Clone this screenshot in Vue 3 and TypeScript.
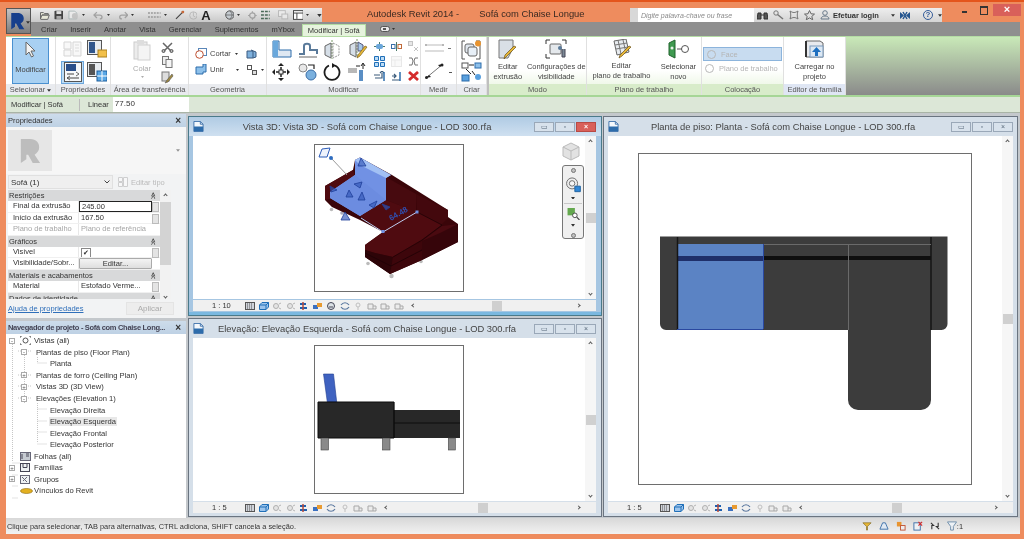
<script setup lang="ts">
interface TreeRow {
  label: string;
  level: number;
  exp?: '+' | '-';
  icon?: string;
  sel?: boolean;
}

interface PropRow {
  head?: boolean;
  label: string;
  value?: string;
  kind?: 'input' | 'check' | 'button' | 'muted' | 'thumb';
}

interface ViewWin {
  id: string;
  title: string;
  scale: string;
  active?: boolean;
}

const tabs = ['Criar', 'Inserir', 'Anotar', 'Vista', 'Gerenciar', 'Suplementos', 'mYbox'];

const propRows: PropRow[] = [
  { head: true, label: 'Restrições' },
  { label: 'Final da extrusão', value: '245.00', kind: 'input' },
  { label: 'Início da extrusão', value: '167.50', kind: 'thumb' },
  { label: 'Plano de trabalho', value: 'Plano de referência', kind: 'muted' },
  { head: true, label: 'Gráficos' },
  { label: 'Visível', kind: 'check' },
  { label: 'Visibilidade/Sobr...', value: 'Editar...', kind: 'button' },
  { head: true, label: 'Materiais e acabamentos' },
  { label: 'Material', value: 'Estofado Verme...', kind: 'thumb' },
  { head: true, label: 'Dados de identidade' },
];

const treeRows: TreeRow[] = [
  { label: 'Vistas (all)', level: 0, exp: '-', icon: 'views' },
  { label: 'Plantas de piso (Floor Plan)', level: 1, exp: '-' },
  { label: 'Planta', level: 2 },
  { label: 'Plantas de forro (Ceiling Plan)', level: 1, exp: '+' },
  { label: 'Vistas 3D (3D View)', level: 1, exp: '+' },
  { label: 'Elevações (Elevation 1)', level: 1, exp: '-' },
  { label: 'Elevação Direita', level: 2 },
  { label: 'Elevação Esquerda', level: 2, sel: true },
  { label: 'Elevação Frontal', level: 2 },
  { label: 'Elevação Posterior', level: 2 },
  { label: 'Folhas (all)', level: 0, icon: 'sheets' },
  { label: 'Famílias', level: 0, exp: '+', icon: 'fam' },
  { label: 'Grupos', level: 0, exp: '+', icon: 'groups' },
  { label: 'Vínculos do Revit', level: 0, icon: 'links' },
];

const views: ViewWin[] = [
  { id: 'v3d', title: 'Vista 3D: Vista 3D - Sofá com Chaise Longue - LOD 300.rfa', scale: '1 : 10', active: true },
  { id: 'plan', title: 'Planta de piso: Planta - Sofá com Chaise Longue - LOD 300.rfa', scale: '1 : 5' },
  { id: 'elev', title: 'Elevação: Elevação Esquerda - Sofá com Chaise Longue - LOD 300.rfa', scale: '1 : 5' },
];

const barIcons = ['b-grid', 'b-cube', 'b-sun', 'b-sun', 'b-arrows', 'b-orange', 'b-loop', 'b-bulb', 'b-crop', 'b-crop'];
const barIcons3d = ['b-grid', 'b-cube', 'b-sun', 'b-sun', 'b-arrows', 'b-orange', 'b-shadow', 'b-loop', 'b-bulb', 'b-crop', 'b-crop', 'b-crop'];
const grips = [
  '330,186 337,190 331,192',
  '349,190 353,197 346,197',
  '345,212 341,220 350,220',
  '358,200 362,192 365,200',
  '369,205 377,201 374,208',
  '361,158 366,166 358,166',
  '382,204 390,207 386,210',
  '354,184 362,182 360,188',
];
</script>

<template>
  <div class="app">
    <svg class="sprite" width="0" height="0">
      <symbol id="b-grid" viewBox="0 0 10 8"><rect x=".5" y=".5" width="9" height="7" fill="#cfd3da" stroke="#555" /><path d="M2 2h6M2 4h6M2 6h6" stroke="#555" stroke-dasharray="1 1" /></symbol>
      <symbol id="b-cube" viewBox="0 0 10 8"><path d="M.5 3 3 .5h6.500V5L7 7.500H.5z" fill="#9cc4ec" stroke="#1f6fb8" /><path d="M.5 3H7v4.500M7 3l2.500-2.500" fill="none" stroke="#1f6fb8" /></symbol>
      <symbol id="b-sun" viewBox="0 0 10 8"><circle cx="4" cy="4" r="2.500" fill="#e4e4e4" stroke="#b0b0b0" /><path d="M7 2l2-1M7 6l2 1" stroke="#b5b5b5" /></symbol>
      <symbol id="b-arrows" viewBox="0 0 10 8"><path d="M1 2h6M1 6h7" stroke="#1d5fb0" stroke-width="2" /><path d="M4 0v8" stroke="#b64a3c" stroke-width="1.500" /></symbol>
      <symbol id="b-orange" viewBox="0 0 10 8"><rect y="3" width="5" height="4" fill="#3a70c0" /><rect x="4" y="1" width="5" height="4" fill="#e89a30" /></symbol>
      <symbol id="b-shadow" viewBox="0 0 10 8"><circle cx="5" cy="4" r="3.500" fill="#dde2e6" stroke="#445" /><path d="M3 5h4" stroke="#445" /></symbol>
      <symbol id="b-loop" viewBox="0 0 10 8"><path d="M1 3c2-3 6-3 8 0M9 5c-2 3-6 3-8 0" fill="none" stroke="#5a78a0" stroke-width="1.200" /></symbol>
      <symbol id="b-bulb" viewBox="0 0 10 8"><circle cx="5" cy="3" r="2" fill="none" stroke="#c0c0c0" /><path d="M5 5v3" stroke="#c0c0c0" /></symbol>
      <symbol id="b-crop" viewBox="0 0 10 8"><path d="M1 2h5v5H1zM6 4h3v3H6" fill="#ececec" stroke="#a8a8a8" /></symbol>
      <symbol id="tri-down" viewBox="0 0 6 4"><path d="M0 0h6L3 4z" fill="#333" /></symbol>
      <symbol id="rvt" viewBox="0 0 24 28"><path d="M2 1h10c7 0 10 4 10 9 0 4-2 6-5 8l6 9h-8l-5-9h-2v5l-6 4z" fill="currentColor" /></symbol>
      <symbol id="doc" viewBox="0 0 12 12"><path d="M1 .5h7l3 3v8H1z" fill="#f4f8fc" stroke="#3a6ea8" /><rect x="1" y="6" width="10" height="5" fill="#2d6cab" /><path d="M8 .5v3h3" fill="none" stroke="#3a6ea8" /></symbol>
    </svg>

    <!-- title bar and tabs -->
    <header class="head">
      <div class="app-btn-wrap">
        <div class="app-btn">
          <svg width="15" height="18" class="r-logo"><use href="#rvt" /></svg>
          <svg width="4" height="3" class="r-caret"><use href="#tri-down" /></svg>
        </div>
      </div>
      <div class="top-row">
        <div class="qat">
          <svg width="10" height="9" viewBox="0 0 10 9"><path d="M.5 1.500h3l1 1h4v1.500H2L.5 8zM2 4h7.500L8 8.500H.5" fill="#e8e8d8" stroke="#666" /></svg>
          <svg width="10" height="10" viewBox="0 0 10 10"><rect x=".5" y=".5" width="9" height="9" rx="1" fill="#444" /><rect x="2.500" y="1" width="5" height="3" fill="#ddd" /><rect x="2.500" y="6" width="5" height="3" fill="#aaa" /></svg>
          <svg width="12" height="10" viewBox="0 0 12 10" class="fade"><path d="M2 1h6l2 2v6H2z" fill="#f0f0f0" stroke="#9aa" /><circle cx="8" cy="6" r="3" fill="#bbb" /></svg>
          <svg width="3" height="2" class="car"><use href="#tri-down" /></svg>
          <svg width="11" height="9" viewBox="0 0 11 9" class="fade ml"><path d="M4 1 1 4l3 3M1 4h6c3 0 3 4 0 4" fill="none" stroke="#8a8a8a" stroke-width="1.300" /></svg>
          <svg width="3" height="2" class="car"><use href="#tri-down" /></svg>
          <svg width="11" height="9" viewBox="0 0 11 9" class="fade ml"><path d="M7 1l3 3-3 3M10 4H4c-3 0-3 4 0 4" fill="none" stroke="#8a8a8a" stroke-width="1.300" /></svg>
          <svg width="3" height="2" class="car"><use href="#tri-down" /></svg>
          <svg width="13" height="8" viewBox="0 0 13 8" class="ml2"><path d="M0 2h13M0 6h13" stroke="#999" stroke-width="1.500" stroke-dasharray="2 1" /></svg>
          <svg width="3" height="2" class="car"><use href="#tri-down" /></svg>
          <svg width="10" height="10" viewBox="0 0 10 10" class="ml"><path d="M1 9 9 1" stroke="#444" stroke-width="1.200" /><circle cx="8" cy="2" r="1.500" fill="#c86a3a" /></svg>
          <svg width="9" height="9" viewBox="0 0 9 9" class="fade"><circle cx="4.500" cy="4.500" r="3.800" fill="none" stroke="#aaa" /><path d="M4.500 1v4l2 1" stroke="#aaa" fill="none" /></svg>
          <span class="qat-a">A</span>
          <svg width="10" height="10" viewBox="0 0 10 10" class="ml2"><circle cx="5" cy="5" r="4.300" fill="#c5cbd0" stroke="#555" /><path d="M1 5h8M5 1c3 2 3 6 0 8" fill="none" stroke="#555" stroke-width=".7" /></svg>
          <svg width="3" height="2" class="car"><use href="#tri-down" /></svg>
          <svg width="9" height="9" viewBox="0 0 9 9" class="ml fade"><circle cx="4.500" cy="4.500" r="2.800" fill="none" stroke="#8a8a8a" stroke-width="1.300" /><path d="M4.500 0v2M4.500 7v2M0 4.500h2M7 4.500h2" stroke="#8a8a8a" /></svg>
          <svg width="9" height="10" viewBox="0 0 9 10"><path d="M0 1.500h9M0 5h9M0 8.500h9" stroke="#4a6a58" stroke-width="1.500" stroke-dasharray="3 1" /></svg>
          <svg width="11" height="10" viewBox="0 0 11 10" class="ml fade"><rect x=".5" y=".5" width="7" height="6" fill="#eee" stroke="#aaa" /><rect x="4" y="4" width="6" height="5" fill="#eee" stroke="#aaa" /></svg>
          <svg width="11" height="10" viewBox="0 0 11 10"><rect x=".5" y=".5" width="10" height="9" fill="#fff" stroke="#444" /><path d="M.5 3h10M4 3v6" stroke="#444" /></svg>
          <svg width="3" height="2" class="car"><use href="#tri-down" /></svg>
          <svg width="5" height="3" class="ml"><use href="#tri-down" /></svg>
        </div>
        <div class="app-title"><span>Autodesk Revit 2014 -</span><span>Sofá com Chaise Longue</span></div>
        <div class="help">
          <div class="search"><i class="search-go"></i><span>Digite palavra-chave ou frase</span></div>
          <div class="help-strip">
            <svg width="11" height="10" viewBox="0 0 11 10"><path d="M1 3h3v6H0zM7 3h3l1 6H7zM4 5h3" fill="#555" stroke="#333" /></svg>
            <svg width="11" height="10" viewBox="0 0 11 10"><circle cx="3" cy="3" r="2.200" fill="none" stroke="#777" /><path d="M4.500 4.500 10 9" stroke="#777" stroke-width="1.500" /></svg>
            <svg width="10" height="10" viewBox="0 0 10 10"><path d="M1 1c3 2 5 2 8 0-1 3-1 5 0 8-3-2-5-2-8 0 1-3 1-5 0-8z" fill="none" stroke="#777" /></svg>
            <svg width="11" height="10" viewBox="0 0 11 10"><path d="m5.500.5 1.500 3.300 3.500.3-2.700 2.300.9 3.400-3.200-1.900-3.200 1.900.9-3.400L.5 4.100 4 3.800z" fill="none" stroke="#666" /></svg>
            <svg width="10" height="10" viewBox="0 0 10 10"><circle cx="5" cy="3" r="2.300" fill="none" stroke="#6a7a8a" /><path d="M1 9c0-4 8-4 8 0z" fill="none" stroke="#6a7a8a" /></svg>
            <b class="login">Efetuar login</b>
            <svg width="4" height="3" class="caret-l"><use href="#tri-down" /></svg>
            <svg width="10" height="9" viewBox="0 0 10 9"><path d="M0 1l4 3.500L0 8zM10 1 6 4.500 10 8z" fill="#24558f" /><path d="M3 1l4 7M7 1 3 8" stroke="#24558f" stroke-width="1.500" /></svg>
            <span class="qmark">?</span>
            <svg width="4" height="3"><use href="#tri-down" /></svg>
          </div>
        </div>
        <div class="win-ctl">
          <i class="wc-min"></i>
          <i class="wc-max"></i>
          <i class="wc-close">×</i>
        </div>
      </div>
      <nav class="tabs">
        <span v-for="t in tabs" :key="t">{{ t }}</span>
        <span class="tab-on">Modificar | Sofá</span>
        <svg width="10" height="6" viewBox="0 0 10 6" class="tab-cam"><rect x=".5" y=".5" width="9" height="5" rx="2" fill="#e8e8e8" stroke="#555" /><rect x="3" y="2" width="3" height="2" fill="#555" /></svg>
        <svg width="3" height="2"><use href="#tri-down" /></svg>
      </nav>
    </header>

    <!-- ribbon -->
    <section class="ribbon">
      <div class="panel" style="width: 50px">
        <div class="body center">
          <button class="modify-btn">
            <svg width="14" height="17" viewBox="0 0 14 17"><path d="M2 1v13l3-3 2.500 5 2-1-2.500-5h4z" fill="#f4f4f4" stroke="#666" /></svg>
            <span>Modificar</span>
          </button>
        </div>
        <div class="label">Selecionar <svg width="4" height="3"><use href="#tri-down" /></svg></div>
      </div>

      <div class="panel" style="width: 55px">
        <div class="body prop-grid">
          <svg width="20" height="18" viewBox="0 0 20 18" class="fade2"><path d="M1 2h7v7H1zM10 2h8v14h-8zM1 10h7v6H1z" fill="#eee" stroke="#999" /><path d="M12 5h4M12 8h4M12 11h4" stroke="#aaa" /></svg>
          <svg width="20" height="18" viewBox="0 0 20 18"><rect x=".5" y=".5" width="14" height="14" fill="#e8ecf0" stroke="#555" /><rect x="2" y="2" width="6" height="11" fill="#30568c" /><rect x="11" y="10" width="9" height="7" fill="#f2c04a" stroke="#a98020" /></svg>
          <div class="prop-sel">
            <svg width="18" height="20" viewBox="0 0 18 20"><rect x=".5" y=".5" width="17" height="19" fill="#f6f8fa" stroke="#555" /><rect x="2" y="2" width="10" height="7" fill="#2a4f8a" /><path d="M3 12h7M3 16h12" stroke="#444" /><path d="m12 10 3 2-3 2M6 14l-3 2 3 2" fill="none" stroke="#444" stroke-width=".8" /></svg>
          </div>
          <svg width="20" height="20" viewBox="0 0 20 20"><rect x=".5" y=".5" width="14" height="14" fill="#e8ecf0" stroke="#555" /><rect x="2" y="2" width="6" height="11" fill="#555" /><rect x="10" y="9" width="10" height="10" fill="#5aa8e6" stroke="#1c5f9e" /><path d="M15 9v10M10 14h10" stroke="#fff" /></svg>
        </div>
        <div class="label">Propriedades</div>
      </div>

      <div class="panel" style="width: 78px">
        <div class="body clip">
          <div class="paste">
            <svg width="18" height="21" viewBox="0 0 18 21"><rect x="1" y="2" width="13" height="17" fill="#ececec" stroke="#ccc" /><rect x="5" y="5" width="12" height="15" fill="#f4f4f4" stroke="#d0d0d0" /><rect x="4" y="0" width="7" height="4" fill="#ddd" /></svg>
            <span>Colar</span>
            <svg width="3" height="2" class="fade2"><use href="#tri-down" /></svg>
          </div>
          <div class="clip-tools">
            <svg width="13" height="11" viewBox="0 0 13 11"><path d="m2 1 9 9M11 1l-9 9" stroke="#666" stroke-width="1.500" /><circle cx="2.500" cy="9" r="1.500" fill="#bbb" stroke="#555" /><circle cx="10.500" cy="9" r="1.500" fill="#bbb" stroke="#555" /></svg>
            <svg width="11" height="12" viewBox="0 0 11 12"><rect x=".5" y=".5" width="6" height="8" fill="#eee" stroke="#777" /><rect x="4" y="3.500" width="6" height="8" fill="#f6f6f6" stroke="#777" /></svg>
            <svg width="13" height="13" viewBox="0 0 13 13"><rect x="1" y="1" width="7" height="9" fill="#ddd" stroke="#777" /><path d="m11 3-5 6-2 3 3-1 5-6z" fill="#a08a40" stroke="#555" stroke-width=".6" /></svg>
          </div>
        </div>
        <div class="label">Área de transferência</div>
      </div>

      <div class="panel" style="width: 78px">
        <div class="body geom">
          <div class="geom-row">
            <svg width="12" height="11" viewBox="0 0 12 11"><rect x="3.500" y=".5" width="8" height="7" fill="#fff" stroke="#5a86b8" /><circle cx="4.500" cy="6.500" r="3.800" fill="#fff" stroke="#c05030" /></svg>
            <span class="gtxt">Cortar</span>
            <svg width="3" height="2"><use href="#tri-down" /></svg>
            <svg width="11" height="10" viewBox="0 0 11 10" class="gsm"><path d="M1 2h6v7H1zM5 1l5 2v5l-3 1" fill="#7eb0dc" stroke="#3a5a80" /></svg>
          </div>
          <div class="geom-row">
            <svg width="12" height="11" viewBox="0 0 12 11"><path d="M1 3h7V0h3v8H8v2H1z" fill="#8dc0ea" stroke="#2d6cab" /></svg>
            <span class="gtxt">Unir</span>
            <svg width="3" height="2" class="gcar"><use href="#tri-down" /></svg>
            <svg width="11" height="10" viewBox="0 0 11 10" class="gsm"><rect x=".5" y=".5" width="4" height="4" fill="#fff" stroke="#555" /><rect x="5.500" y="5.500" width="4" height="4" fill="#ddd" stroke="#555" /></svg>
            <svg width="3" height="2" class="gcar2"><use href="#tri-down" /></svg>
          </div>
        </div>
        <div class="label">Geometria</div>
      </div>

      <div class="panel" style="width: 154px">
        <div class="body mod">
          <svg width="20" height="18" viewBox="0 0 20 18"><path d="M1 1h6v9h12v7H1z" fill="#dfe8f2" stroke="#2d6cab" /><rect x="1" y="1" width="5" height="16" fill="#6aa8dc" /></svg>
          <svg width="20" height="18" viewBox="0 0 20 18"><path d="M1 14h5V6c0-3 6-3 6 0v4h7v4" fill="none" stroke="#5a7a9a" stroke-width="2" /><path d="M1 17h18" stroke="#999" stroke-width="1.500" /></svg>
          <svg width="19" height="19" viewBox="0 0 19 19"><path d="M9 0v19" stroke="#7a9a6a" stroke-dasharray="2 1" /><path d="M8 3 2 6v9l6 3z" fill="#d6dfe8" stroke="#666" /><path d="m10 3 6 3v9l-6 3z" fill="#fff" stroke="#999" stroke-dasharray="2 1" /></svg>
          <svg width="20" height="20" viewBox="0 0 20 20"><path d="M9 0v18" stroke="#7a9a6a" stroke-dasharray="2 1" /><path d="M8 3 2 6v9l6 3z" fill="#d6dfe8" stroke="#666" /><path d="M10 3l5 3v6H10z" fill="#a6c8e8" stroke="#557" /><path d="m19 8-7 9-3 2 1-3 7-9z" fill="#e8b838" stroke="#7a6018" stroke-width=".7" /></svg>
          <div class="mod-small">
            <svg width="11" height="9" viewBox="0 0 11 9"><path d="M0 4.500h11M5.500 0v9" stroke="#4a7a6a" /><rect x="2" y="2" width="7" height="5" rx="2" fill="#6aa6da" /></svg>
            <svg width="11" height="9" viewBox="0 0 11 9"><path d="M5.500 0v9" stroke="#4a7a6a" /><rect x=".5" y="2.500" width="3.500" height="4" fill="#fff" stroke="#3a6ea8" /><rect x="7" y="2.500" width="3.500" height="4" fill="#fff" stroke="#c06a3a" /></svg>
            <svg width="11" height="11" viewBox="0 0 11 11" class="fade"><rect x=".5" y=".5" width="4" height="4" fill="#ddd" stroke="#aaa" /><path d="m6 6 4 4M10 6l-4 4" stroke="#aaa" /></svg>
            <svg width="11" height="11" viewBox="0 0 11 11"><path d="M.5.500h4v4h-4zM6.500.5h4v4h-4zM.5 6.500h4v4h-4zM6.500 6.500h4v4h-4z" fill="#bcdcf6" stroke="#1f6fb8" /></svg>
            <svg width="11" height="11" viewBox="0 0 11 11" class="fade2"><rect x=".5" y=".5" width="10" height="10" fill="#f2f2f2" stroke="#c6c6c6" /><path d="M.5 4h10M4 4v6" stroke="#ccc" /></svg>
            <svg width="11" height="9" viewBox="0 0 11 9"><path d="M1 1h3l1 3-1 4H1M10 1H7L6 4l1 4h3" fill="none" stroke="#777" /></svg>
            <svg width="11" height="11" viewBox="0 0 11 11"><path d="M1 7h7V2M0 4h6M6 2l2-2 2 2" fill="none" stroke="#3a5a7a" stroke-width="1.200" /><path d="M10 1v9" stroke="#2d6cab" stroke-width="1.500" /></svg>
            <svg width="11" height="11" viewBox="0 0 11 11"><path d="M1 9h8M1 5h4M3 3l2 2-2 2" fill="none" stroke="#3a5a7a" stroke-width="1.200" /><path d="M9 1v9" stroke="#2d6cab" stroke-width="1.500" /></svg>
            <svg width="11" height="10" viewBox="0 0 11 10"><path d="m1 1 9 8M10 1 1 9" stroke="#d42c2c" stroke-width="2.800" /></svg>
          </div>
          <svg width="18" height="18" viewBox="0 0 18 18"><path d="M9 0l3 3H6zM9 18l3-3H6zM0 9l3-3v6zM18 9l-3-3v6z" fill="#222" /><path d="M4 9h10M9 4v10" stroke="#222" stroke-width="1.500" /><rect x="7" y="7" width="4" height="4" fill="#f4f4f4" stroke="#333" /></svg>
          <svg width="19" height="18" viewBox="0 0 19 18"><circle cx="5" cy="5" r="4" fill="#e8e8e8" stroke="#888" /><circle cx="13" cy="12" r="5" fill="#7ab0de" stroke="#3a6ea8" /><path d="M10 2h6v4" fill="none" stroke="#222" stroke-width="1.200" /></svg>
          <svg width="18" height="18" viewBox="0 0 18 18"><path d="M12 2.500a7.500 7.500 0 1 1-6 0" fill="none" stroke="#1c1c1c" stroke-width="1.800" /><path d="m9 0 4 2.500-4 2.500z" fill="#1c1c1c" /></svg>
          <svg width="20" height="18" viewBox="0 0 20 18"><path d="M0 5h9v5H0z" fill="#b8b8b8" /><path d="M11 7h4v11h-4z" fill="#5a8ec4" /><path d="M15 6V1M13 3l2-3 2 3M8 3h4" stroke="#222" fill="none" /></svg>
        </div>
        <div class="label">Modificar</div>
      </div>

      <div class="panel" style="width: 36px">
        <div class="body measure">
          <svg width="26" height="14" viewBox="0 0 26 14"><path d="M0 3h19" stroke="#bbb" /><path d="M0 9h19" stroke="#ddd" stroke-width="2" /><circle cx="1" cy="3" r="1" fill="#aaa" /><circle cx="18" cy="3" r="1" fill="#aaa" /><rect x="23" y="6" width="3" height="1" fill="#777" /></svg>
          <svg width="27" height="18" viewBox="0 0 27 18"><path d="M1 16 18 2" stroke="#777" /><path d="m1 16 5-1-2-2zM18 2l-5 1 2 2z" fill="#222" /><circle cx="1.500" cy="15.500" r="1.500" fill="#222" /><circle cx="17" cy="3" r="1.500" fill="#222" /><rect x="24" y="10" width="3" height="1" fill="#555" /></svg>
        </div>
        <div class="label">Medir</div>
      </div>

      <div class="panel" style="width: 30px">
        <div class="body create">
          <svg width="21" height="20" viewBox="0 0 21 20"><path d="M4 1H1v18h3M15 1h4v18h-4" fill="none" stroke="#555" /><rect x="4" y="4" width="9" height="9" rx="2" fill="#dfe6ee" stroke="#666" /><rect x="7" y="7" width="9" height="9" rx="2" fill="#e8f0f8" stroke="#666" /><circle cx="17" cy="3.500" r="3" fill="#e89430" /></svg>
          <svg width="21" height="20" viewBox="0 0 21 20"><rect x="1" y="1" width="6" height="5" fill="#fff" stroke="#555" /><rect x="14" y="1" width="6" height="5" fill="#8ec0ea" stroke="#2d6cab" /><rect x="1" y="13" width="7" height="6" fill="#5aa0de" stroke="#2d6cab" /><circle cx="17" cy="15" r="3" fill="#5aa0de" /><path d="M8 3h5M5 7l5 5M11 9l3 4" stroke="#222" /></svg>
        </div>
        <div class="label">Criar</div>
      </div>

      <div class="panel ctx thick" style="width: 100px">
        <div class="body ctx-body">
          <div class="rb-col" style="width: 38px">
            <svg width="20" height="21" viewBox="0 0 20 21"><path d="M1 1h14v8l-5 10H1z" fill="#d9dfe6" stroke="#777" /><path d="M18 8 9 17l-3 3 1-4 9-9z" fill="#e8b838" stroke="#6a5018" stroke-width=".7" /></svg>
            <span>Editar<br />extrusão</span>
          </div>
          <div class="rb-col" style="width: 60px">
            <svg width="22" height="21" viewBox="0 0 22 21"><path d="M5 1H1v4M17 1h4v4M1 15v4h4" fill="none" stroke="#333" /><rect x="5" y="5" width="11" height="10" rx="1" fill="#e4e8ec" stroke="#666" /><circle cx="15" cy="9" r="2" fill="#5a7a9a" /><path d="M17 10v8h3v-8" fill="#7c8a96" stroke="#445" /></svg>
            <span>Configurações de<br />visibilidade</span>
          </div>
        </div>
        <div class="label">Modo</div>
      </div>

      <div class="panel ctx" style="width: 115px">
        <div class="body ctx-body">
          <div class="rb-col" style="width: 70px">
            <svg width="21" height="20" viewBox="0 0 21 20"><path d="M3 2 15 0l3 13-12 3z" fill="#e8ecf0" stroke="#666" /><path d="m4 6 12-2M5 10l12-2M7 1l3 14M12 1l3 13" stroke="#777" /><path d="M20 8 11 17l-3 2 1-3 9-9z" fill="#e8b838" stroke="#6a5018" stroke-width=".7" /></svg>
            <span>Editar<br />plano de trabalho</span>
          </div>
          <div class="rb-col" style="width: 46px">
            <svg width="21" height="21" viewBox="0 0 21 21"><path d="M1 4 7 1v18l-6-3z" fill="#3f9a50" stroke="#21632d" /><circle cx="4" cy="9" r="1.500" fill="#e8f0e8" /><path d="M9 10h5" stroke="#555" /><circle cx="17" cy="10" r="3.500" fill="none" stroke="#555" /></svg>
            <span>Selecionar<br />novo</span>
          </div>
        </div>
        <div class="label">Plano de trabalho</div>
      </div>

      <div class="panel ctx" style="width: 82px">
        <div class="body place">
          <div class="place-on"><i class="place-dot"></i>Face</div>
          <div class="place-off"><i class="place-dot"></i>Plano de trabalho</div>
        </div>
        <div class="label">Colocação</div>
      </div>

      <div class="panel" style="width: 62px">
        <div class="body">
          <div class="rb-col" style="width: 62px">
            <svg width="21" height="21" viewBox="0 0 21 21"><path d="M2 2h14l3 2v14H2z" fill="#e8eaee" stroke="#666" /><path d="M2 2v16" stroke="#333" stroke-width="2" /><rect x="6" y="7" width="13" height="11" fill="#dce8f4" stroke="#7a9abc" /><path d="M12.500 8 8 13h3v4h3v-4h3z" fill="#1d6fc0" /></svg>
            <span>Carregar no<br />projeto</span>
          </div>
        </div>
        <div class="label fam">Editor de família</div>
      </div>

      <div class="rib-fill"></div>
    </section>

    <div class="options">
      <span class="opt-ctx">Modificar | Sofá</span>
      <span class="opt-lin">Linear</span>
      <span class="opt-input">77.50</span>
    </div>

    <main class="work">
      <aside class="left">
        <section class="props">
          <div class="dock-head"><span>Propriedades</span><b>×</b></div>
          <div class="type-pick">
            <div class="thumb">
              <svg width="22" height="26" class="thumb-r"><use href="#rvt" /></svg>
            </div>
            <svg width="4" height="3" class="type-caret"><use href="#tri-down" /></svg>
          </div>
          <div class="type-row">
            <div class="type-sel"><span>Sofá (1)</span><svg width="6" height="4" viewBox="0 0 6 4"><path d="m.5.500 2.500 2.500L5.500.5" fill="none" stroke="#444" /></svg></div>
            <svg width="10" height="10" viewBox="0 0 10 10" class="fade2"><path d="M.5.500h4v4h-4zM5.500.5h4v9h-4zM.5 5.500h4v4h-4z" fill="#fff" stroke="#999" /></svg>
            <span class="edit-type">Editar tipo</span>
          </div>
          <div class="ptable">
            <div class="prows">
              <template v-for="r in propRows" :key="r.label">
                <div v-if="r.head" class="phead"><span>{{ r.label }}</span><em>≪</em></div>
                <div v-else class="prow" :class="{ muted: r.kind === 'muted' }">
                  <span class="pname">{{ r.label }}</span>
                  <span v-if="r.kind === 'button'" class="pbtn">{{ r.value }}</span>
                  <span v-else class="pval" :class="{ pinput: r.kind === 'input' }">
                    <i v-if="r.kind === 'check'" class="pcheck">✔</i>{{ r.value }}
                  </span>
                  <i v-if="r.kind === 'input' || r.kind === 'thumb' || r.kind === 'check'" class="pmini"></i>
                </div>
              </template>
            </div>
            <div class="pscroll">
              <span class="chev up"></span>
              <i></i>
              <span class="chev down"></span>
            </div>
          </div>
          <div class="pfoot">
            <a>Ajuda de propriedades</a>
            <span class="apply">Aplicar</span>
          </div>
        </section>

        <section class="nav">
          <div class="dock-head"><span class="nav-title">Navegador de projeto - Sofá com Chaise Long...</span><b>×</b></div>
          <div class="tree">
            <svg class="tree-lines" width="60" height="165" viewBox="0 0 60 165">
              <path d="M12.500 8v120M12.500 129h8M12.500 141h5M12.500 152h5M12.500 164h5M24.500 17v47M24.500 64v5" stroke="#c6c6c6" stroke-dasharray="1 1" fill="none" />
              <path d="M18 17h14M18 41h14M18 52h14M18 64h14M37.500 23v6h9M37.500 69v40M37.500 75h9M37.500 87h9M37.500 98h9M37.500 110h9" stroke="#c6c6c6" stroke-dasharray="1 1" fill="none" />
            </svg>
            <div v-for="r in treeRows" :key="r.label" class="trow" :class="'lv' + r.level">
              <i v-if="r.exp" class="texp">{{ r.exp }}</i>
              <svg v-if="r.icon === 'views'" width="11" height="9" viewBox="0 0 11 9" class="ticon"><path d="M0 2V0h2M9 0h2v2M0 7v2h2M9 9h2V7" fill="none" stroke="#555" /><circle cx="5.500" cy="4.500" r="2.500" fill="none" stroke="#555" /></svg>
              <svg v-else-if="r.icon === 'sheets'" width="11" height="9" viewBox="0 0 11 9" class="ticon"><rect x=".5" y=".5" width="10" height="8" fill="#c6cbd2" stroke="#667" /><path d="M6 2h3M6 4h3M2 2v5" stroke="#445" /></svg>
              <svg v-else-if="r.icon === 'fam'" width="11" height="9" viewBox="0 0 11 9" class="ticon"><rect x=".5" y=".5" width="9" height="8" fill="#eef1f4" stroke="#445" /><path d="M3 .5v4h4v-4" fill="none" stroke="#445" /></svg>
              <svg v-else-if="r.icon === 'groups'" width="11" height="9" viewBox="0 0 11 9" class="ticon"><rect x=".5" y=".5" width="9" height="8" fill="#eef1f4" stroke="#667" /><path d="m2 2 5 5M3 6l4-4" stroke="#667" /></svg>
              <svg v-else-if="r.icon === 'links'" width="13" height="6" viewBox="0 0 13 6" class="ticon"><ellipse cx="6.500" cy="3" rx="6" ry="2.500" fill="#e3b020" stroke="#8a6a10" stroke-width=".6" /></svg>
              <span class="tlabel" :class="{ tsel: r.sel }">{{ r.label }}</span>
            </div>
          </div>
        </section>
      </aside>

      <div class="views">
        <section v-for="v in views" :key="v.id" class="vw" :class="[v.id, { on: v.active }]">
          <div class="vw-head">
            <svg width="11" height="11"><use href="#doc" /></svg>
            <span class="vw-title">{{ v.title }}</span>
            <div class="vw-btns"><i>▭</i><i>▫</i><i class="vw-x">×</i></div>
          </div>
          <div class="vw-main">
            <div class="canvas">
              <div class="sheet">
                <svg v-if="v.id === 'v3d'" width="148" height="146" viewBox="315 145 148 146">
                  <circle cx="331.500" cy="209.500" r="1.800" fill="#bbb" />
                  <circle cx="342" cy="213" r="1.800" fill="#aab" />
                  <circle cx="368" cy="263.500" r="1.800" fill="#bbb" />
                  <circle cx="391.500" cy="276" r="2.200" fill="#bbb" />
                  <circle cx="421" cy="261.500" r="1.800" fill="#bbb" />
                  <path d="M325 186 353 170 355 160 360 157.500 392 175 448 210 448 217 458 224 458 242 422 260 390 274 365 257 365 245 383 232 360 220 332 207 325 200z" fill="#3a0509" />
                  <path d="M386 177 416 194 416 212 386 200z" fill="#470a0f" />
                  <path d="M416 194 448 210 448 218 441 225 417 212z" fill="#43080d" />
                  <path d="M386 200 360 216 383 232 417 212z" fill="#4f0b10" />
                  <path d="M365 245 383 232 417 212 442 225 422 240 393 257 375 253 365 250z" fill="#4f0b10" />
                  <path d="M422 240 442 226 458 224 458 242 422 260z" fill="#36050a" />
                  <path d="M422 241 442 226 458 224 440 233z" fill="#4a0a10" />
                  <path d="M365 250 375 253 393 257 390 274 365 257z" fill="#2d0408" />
                  <path d="M393 257 422 241 422 260 390 274z" fill="#3d060b" />
                  <path d="M325 186 353 170 355 176 330 192 330 199 325 200z" fill="#4f0b10" />
                  <path d="M365 253 391 266 422 250M417 212 442 225 422 240 393 257" stroke="#1b0204" fill="none" stroke-width=".7" />
                  <path d="M330 192 355 175 355 160 360 157.500 391 175 386 178 386 200 360 216 330 198z" fill="#7191e4" />
                  <path d="M355 160 360 157.500 391 175 386 178 360 165z" fill="#a2c0f4" />
                  <path d="M330 192 355 175 386 200 360 216 330 198z" fill="#6c8ce0" />
                  <path v-for="g in grips" :key="g" :d="'M' + g + 'z'" fill="#3458b8" fill-opacity=".65" stroke="#1f3f9a" stroke-width=".8" />
                  <path d="M361 218 383 232 417 212" stroke="#c0cdf0" fill="none" />
                  <rect x="381.500" y="230" width="3" height="3" fill="#6f8fe2" />
                  <rect x="415.500" y="210.500" width="3" height="3" fill="#6f8fe2" />
                  <text x="391" y="221" font-size="8" font-weight="700" fill="#2f4fb0" transform="rotate(-30 391 221)" class="dim">64.48</text>
                  <path d="M332 159 347 175" stroke="#999" />
                  <path d="m322 149 8-1-3 9h-8z" fill="#eef3fc" stroke="#2d5cb8" />
                  <circle cx="331" cy="158" r="2" fill="#2d6cc0" />
                </svg>

                <svg v-else-if="v.id === 'plan'" width="332" height="330" viewBox="639 154 332 330">
                  <path d="M660 236.500H947.500V324a6 6 0 0 1-6 6H931V400a10 10 0 0 1-10 10H858a10 10 0 0 1-10-10V330H666a6 6 0 0 1-6-6z" fill="#3c3c3c" />
                  <path d="M677.500 244H763V329H677.500z" fill="#5b83c4" />
                  <path d="M677.500 256H763V261H677.500z" fill="#1f2f6a" />
                  <path d="M763 256H931V260H763z" fill="#0e0e0e" />
                  <path d="M677.500 237V330M931 237V330" stroke="#151515" stroke-width="1.500" />
                  <path d="M763 244.500H931M848.500 244V330" stroke="#6a6a6a" />
                  <path d="M677 329.500H763M763.500 244V329" stroke="#2a48a0" />
                </svg>

                <svg v-else width="148" height="147" viewBox="315 346 148 147">
                  <path d="M323.500 374H333.500L336.700 402H327.300z" fill="#3f62c0" stroke="#243f90" stroke-width=".6" />
                  <rect x="318" y="402" width="76.300" height="36" fill="#282828" />
                  <path d="M394 410H460V438H394z" fill="#282828" />
                  <path d="M394 423H460" stroke="#0c0c0c" />
                  <path d="M318 402H394V438H318zM394 438V410" stroke="#0c0c0c" fill="none" />
                  <rect x="321" y="438" width="7.500" height="12" fill="#8a8a8a" stroke="#444" stroke-width=".6" />
                  <rect x="382.500" y="438" width="7.500" height="12" fill="#8a8a8a" stroke="#444" stroke-width=".6" />
                  <rect x="448.300" y="438" width="7" height="12" fill="#8a8a8a" stroke="#444" stroke-width=".6" />
                </svg>
              </div>

              <div v-if="v.active" class="cube-nav">
                <svg width="18" height="19" viewBox="0 0 18 19" class="vcube"><path d="M9 1 17 5v9l-8 4-8-4V5z" fill="#e2e2e2" stroke="#bbb" /><path d="M1 5l8 4 8-4M9 9v9" fill="none" stroke="#bbb" /></svg>
                <div class="navbar">
                  <i class="nb-dot"></i>
                  <svg width="18" height="17" viewBox="0 0 18 17"><circle cx="8" cy="7" r="6" fill="#eee" stroke="#666" /><circle cx="8" cy="7" r="3" fill="#f6f6f6" stroke="#666" /><path d="M11 10h6v6h-6z" fill="#2f86d6" stroke="#1c5f9e" /></svg>
                  <svg width="4" height="3"><use href="#tri-down" /></svg>
                  <hr />
                  <svg width="13" height="13" viewBox="0 0 13 13"><rect width="8" height="8" fill="#64a84e" /><circle cx="8" cy="8" r="2.500" fill="#fff" stroke="#444" /><path d="m10 10 3 3" stroke="#444" stroke-width="1.300" /></svg>
                  <svg width="4" height="3"><use href="#tri-down" /></svg>
                  <i class="nb-dot"></i>
                </div>
              </div>
            </div>
            <div class="vscroll">
              <span class="chev up"></span>
              <i></i>
              <span class="chev down"></span>
            </div>
          </div>
          <div class="vbar">
            <span class="vb-scale">{{ v.scale }}</span>
            <div class="vb-icons">
              <svg v-for="(b, i) in v.active ? barIcons3d : barIcons" :key="i" width="10" height="8"><use :href="'#' + b" /></svg>
            </div>
            <span class="chev left"></span>
            <div class="hscroll"><i></i></div>
            <span class="chev right"></span>
          </div>
        </section>
      </div>
    </main>

    <footer class="status">
      <span>Clique para selecionar, TAB para alternativas, CTRL adiciona, SHIFT cancela a seleção.</span>
      <div class="st-icons">
        <svg viewBox="0 0 11 11"><path d="M1 2h9L6 6v4L5 10V6z" fill="#e8b838" stroke="#7a6018" stroke-width=".7" /></svg>
        <svg viewBox="0 0 11 11"><path d="M1 9h9L7 2H4z" fill="#dfe8f2" stroke="#3a6ea8" /></svg>
        <svg viewBox="0 0 11 11"><rect x="1" y="1" width="5" height="5" fill="#e89430" /><rect x="5" y="5" width="5" height="5" fill="#eee" stroke="#c05030" /></svg>
        <svg viewBox="0 0 11 11"><rect x="1" y="2" width="7" height="8" fill="#eef1f4" stroke="#3a6ea8" /><path d="m6 1 4 4M10 1 6 5" stroke="#d42c2c" stroke-width="1.300" /></svg>
        <svg viewBox="0 0 11 11"><path d="M1 2l3 3H2v4M10 9 7 6h2V2" fill="none" stroke="#333" stroke-width="1.200" /></svg>
        <svg viewBox="0 0 11 11"><path d="M.5 1h10L7 6v4H4V6z" fill="#eef2f6" stroke="#6a8aa8" /></svg>
        <span class="st-num">:1</span>
      </div>
    </footer>
  </div>
</template>

<style scoped>
.app {
  width: 1024px;
  height: 539px;
  box-sizing: border-box;
  overflow: hidden;
  display: flex;
  flex-direction: column;
  background: #ee8c5e;
  border-top: 2px solid #e4551c;
  font-family: "Liberation Sans", Arial, sans-serif;
  font-size: 7.5px;
  color: #333;
  filter: blur(0.4px);
}

.sprite {
  position: absolute;
}

.fade {
  opacity: 0.7;
}

.fade2 {
  opacity: 0.4;
}

/* title bar */
.head {
  display: grid;
  grid-template-columns: 25px 1fr;
  grid-template-rows: 20px 14px;
  margin: 0 4px 0 6px;
}

.app-btn-wrap {
  grid-row: 1 / 3;
  padding-top: 6px;
}

.app-btn {
  height: 26px;
  box-sizing: border-box;
  display: flex;
  align-items: center;
  gap: 1px;
  padding-left: 3px;
  background: linear-gradient(#c4c4c4, #7c7c7c);
  border: 1px solid #555;
}

.r-logo {
  color: #173f8c;
}

.r-caret {
  margin-top: 2px;
}

.top-row {
  display: flex;
  align-items: flex-end;
  min-width: 0;
}

.qat {
  width: 291px;
  height: 14px;
  flex: none;
  box-sizing: border-box;
  display: flex;
  align-items: center;
  gap: 4px;
  padding-left: 9px;
  background: linear-gradient(#ececec, #c9c9c9);
}

.car {
  margin-left: -1px;
}

.ml {
  margin-left: 4px;
}

.ml2 {
  margin-left: 10px;
}

.qat-a {
  font-size: 13px;
  font-weight: 700;
  line-height: 13px;
  color: #222;
}

.app-title {
  width: 308px;
  flex: none;
  box-sizing: border-box;
  padding-left: 45px;
  display: flex;
  gap: 20px;
  align-self: center;
  margin-top: 2px;
  font-size: 9.4px;
  color: #3a2a22;
  white-space: nowrap;
}

.help {
  width: 310px;
  height: 14px;
  flex: none;
  display: flex;
}

.search {
  width: 124px;
  flex: none;
  display: flex;
  align-items: center;
  gap: 3px;
  background: #fff;
  font-size: 7px;
  font-style: italic;
  color: #8a8a8a;
  white-space: nowrap;
}

.search-go {
  width: 8px;
  height: 100%;
  background: #d8d8d8;
}

.help-strip {
  flex: 1;
  display: flex;
  align-items: center;
  gap: 5px;
  padding-left: 3px;
  background: linear-gradient(#eeeeee, #d4d4d4);
}

.login {
  font-size: 7.5px;
  color: #333;
  white-space: nowrap;
  margin-left: -2px;
}

.caret-l {
  margin-left: 7px;
}

.qmark {
  width: 10px;
  height: 10px;
  margin-left: 8px;
  box-sizing: border-box;
  border: 1px solid #345c9a;
  border-radius: 50%;
  text-align: center;
  font-size: 8px;
  line-height: 8px;
  font-weight: 700;
  color: #345c9a;
}

.win-ctl {
  flex: 1;
  display: flex;
  align-self: flex-start;
  justify-content: flex-end;
  align-items: flex-start;
  margin-top: 2px;
}

.win-ctl i {
  display: block;
  font-style: normal;
}

.wc-min {
  width: 5px;
  height: 2px;
  margin: 7px 13px 0 0;
  background: #333;
}

.wc-max {
  width: 6px;
  height: 6px;
  margin: 2px 5px 0 0;
  border: 1px solid #333;
  border-top-width: 2px;
}

.wc-close {
  width: 28px;
  height: 12px;
  margin-right: -1px;
  background: #d9605a;
  color: #fff;
  text-align: center;
  font-size: 11px;
  line-height: 11px;
  font-weight: 700;
}

.tabs {
  display: flex;
  align-items: center;
  gap: 13px;
  padding-left: 10px;
  background: #8f8f8f;
  font-size: 7.5px;
  color: #333;
  white-space: nowrap;
}

.tab-on {
  align-self: flex-end;
  height: 12px;
  box-sizing: border-box;
  margin-left: -6px;
  padding: 1px 5px 0;
  background: #e6f3dd;
  border: 1px solid #b2dca2;
  border-bottom: 0;
  line-height: 10px;
}

.tab-cam {
  margin-left: 1px;
  margin-right: -11px;
}

/* ribbon */
.ribbon {
  height: 61px;
  flex: none;
  box-sizing: border-box;
  margin: 0 4px 0 6px;
  display: flex;
  background: #fff;
  border-top: 1px solid #b4dca4;
  border-bottom: 2px solid #a6d696;
}

.panel {
  flex: none;
  display: flex;
  flex-direction: column;
  border-right: 1px solid #e0e0e0;
  box-sizing: border-box;
}

.panel.thick {
  border-left: 2px solid #bfbfbf;
}

.body {
  flex: 1;
  min-height: 0;
  display: flex;
}

.center {
  justify-content: center;
  padding-top: 1px;
}

.label {
  height: 11px;
  flex: none;
  background: #e9ebef;
  text-align: center;
  line-height: 11px;
  font-size: 7.5px;
  color: #555;
  white-space: nowrap;
}

.ctx .body {
  background: linear-gradient(#fff 70%, #f0f8ea);
}

.ctx .label {
  background: #d8ecca;
}

.label.fam {
  background: #dfe6f4;
}

.rib-fill {
  flex: 1;
  background: linear-gradient(#c9e9b8, #8a8a8a);
}

.modify-btn {
  width: 37px;
  height: 46px;
  padding: 2px 0 0;
  display: flex;
  flex-direction: column;
  align-items: center;
  gap: 7px;
  background: #a8d0f2;
  border: 1px solid #4a90d0;
  font: inherit;
  color: #444;
}

.prop-grid {
  display: grid;
  grid-template-columns: 27px 22px;
  grid-template-rows: 22px 24px;
  justify-items: center;
  align-items: center;
  padding: 1px 0 0 3px;
}

.prop-sel {
  width: 23px;
  height: 23px;
  display: flex;
  align-items: center;
  justify-content: center;
  background: #bcdcf6;
  border: 1px solid #6ca6dc;
  box-sizing: border-box;
}

.clip {
  padding: 3px 0 0 21px;
  gap: 9px;
}

.paste {
  display: flex;
  flex-direction: column;
  align-items: center;
  gap: 3px;
  width: 20px;
  color: #aaa;
}

.clip-tools {
  display: flex;
  flex-direction: column;
  align-items: center;
  gap: 3px;
  padding-top: 2px;
}

.geom {
  flex-direction: column;
  gap: 5px;
  padding: 11px 0 0 6px;
}

.geom-row {
  display: flex;
  align-items: center;
  gap: 2px;
}

.gtxt {
  margin-left: 1px;
  margin-right: 2px;
  color: #444;
}

.gsm {
  margin-left: 6px;
}

.gcar {
  margin-left: 8px;
}

.gcar2 {
  margin-left: 1px;
}

.mod {
  display: grid;
  grid-template-columns: 26px 25px 25px 26px 1fr;
  grid-template-rows: 22px 24px;
  align-items: center;
  padding: 1px 0 0 5px;
}

.mod-small {
  grid-column: 5;
  grid-row: 1 / 3;
  display: grid;
  grid-template-columns: repeat(3, 17px);
  grid-template-rows: repeat(3, 15px);
  align-items: center;
}

.mod-small svg {
  justify-self: start;
}

.measure,
.create {
  flex-direction: column;
  justify-content: space-around;
  align-items: flex-start;
  padding: 2px 0 1px 4px;
}

.rb-col {
  display: flex;
  flex-direction: column;
  align-items: center;
  padding-top: 2px;
  gap: 2px;
  text-align: center;
  line-height: 10px;
  color: #444;
  white-space: nowrap;
}

.place {
  flex-direction: column;
  padding-top: 10px;
  color: #b5b5b5;
}

.place-on,
.place-off {
  display: flex;
  align-items: center;
  gap: 5px;
  height: 14px;
  box-sizing: border-box;
  padding-left: 3px;
}

.place-on {
  margin: 0 1px;
  background: #c8dcf0;
  border: 1px solid #8cb4dc;
}

.place-dot {
  width: 7px;
  height: 7px;
  border-radius: 50%;
  border: 1px solid #b8b8b8;
}

/* options */
.options {
  height: 16px;
  flex: none;
  margin: 0 4px 0 6px;
  display: flex;
  align-items: center;
  background: #dce7d7;
  border-bottom: 1px solid #a9b4a6;
  box-sizing: border-box;
}

.opt-ctx {
  width: 74px;
  padding-left: 5px;
  box-sizing: border-box;
  border-right: 1px solid #bbb;
  line-height: 12px;
}

.opt-lin {
  margin-left: 8px;
}

.opt-input {
  width: 76px;
  height: 15px;
  margin-left: 4px;
  padding-left: 2px;
  box-sizing: border-box;
  background: #fff;
  line-height: 14px;
  font-size: 8px;
}

/* workspace */
.work {
  flex: 1;
  min-height: 0;
  margin: 0 4px 0 6px;
  display: flex;
  gap: 2px;
  background: #c4c8cc;
}

.left {
  width: 180px;
  flex: none;
  display: flex;
  flex-direction: column;
  gap: 3px;
  padding-top: 1px;
}

.props {
  height: 204px;
  flex: none;
  display: flex;
  flex-direction: column;
  background: #f2f3f4;
}

.dock-head {
  height: 13px;
  flex: none;
  display: flex;
  justify-content: space-between;
  align-items: center;
  padding: 0 5px 0 2px;
  background: linear-gradient(#cddceb, #bed1e4);
  white-space: nowrap;
  color: #333;
}

.dock-head b {
  font-size: 10px;
  line-height: 10px;
}

.nav-title {
  font-weight: 700;
  letter-spacing: -0.3px;
  color: #445;
}

.type-pick {
  height: 47px;
  flex: none;
  display: flex;
  align-items: center;
  justify-content: space-between;
  padding: 0 6px 0 2px;
  background: #f6f6f6;
}

.thumb {
  width: 44px;
  height: 41px;
  display: flex;
  align-items: center;
  justify-content: center;
  background: #e6e6e6;
}

.thumb-r {
  color: #bdbdbd;
}

.type-caret {
  opacity: 0.5;
}

.type-row {
  height: 16px;
  flex: none;
  display: flex;
  align-items: center;
  gap: 3px;
  padding-left: 2px;
}

.type-sel {
  width: 105px;
  height: 14px;
  box-sizing: border-box;
  display: flex;
  align-items: center;
  justify-content: space-between;
  padding: 0 2px;
  background: #efefef;
  border: 1px solid #e0e0e0;
  margin-right: 2px;
  font-size: 8px;
}

.edit-type {
  color: #bbb;
}

.ptable {
  height: 109px;
  flex: none;
  display: flex;
  padding-left: 2px;
  overflow: hidden;
  background: #f2f3f4;
}

.prows {
  width: 152px;
  flex: none;
  background: #fff;
}

.phead {
  height: 11px;
  display: flex;
  align-items: center;
  justify-content: space-between;
  padding: 0 3px 0 1px;
  background: #d8d9da;
  line-height: 11px;
}

.phead em {
  font-style: normal;
  transform: rotate(90deg);
  font-size: 7px;
}

.prow {
  height: 11.6px;
  display: grid;
  grid-template-columns: 71px 1fr;
  position: relative;
  border-bottom: 1px solid #f0f0f0;
  box-sizing: border-box;
  line-height: 10.6px;
  white-space: nowrap;
}

.prow.muted {
  color: #a6a6a6;
}

.pname {
  padding-left: 5px;
  border-right: 1px solid #e8e8e8;
}

.pval {
  padding-left: 2px;
  overflow: hidden;
}

.pinput {
  border: 1px solid #222;
  line-height: 9px;
  margin-right: 8px;
}

.pcheck {
  display: inline-block;
  width: 8px;
  height: 8px;
  border: 1px solid #888;
  font-style: normal;
  line-height: 8px;
  font-size: 7px;
  text-align: center;
  vertical-align: top;
  margin-top: 1px;
}

.pbtn {
  background: linear-gradient(#f4f4f4, #dedede);
  border: 1px solid #aaa;
  border-radius: 1px;
  text-align: center;
  line-height: 9px;
  margin-right: 8px;
}

.pmini {
  position: absolute;
  right: 1px;
  top: 1px;
  width: 5px;
  height: 8px;
  background: #e4e4e4;
  border: 1px solid #bbb;
}

.pscroll {
  width: 11px;
  display: flex;
  flex-direction: column;
  align-items: center;
  background: #f2f2f2;
}

.pscroll i {
  width: 100%;
  height: 63px;
  margin: 5px 0 30px;
  background: #d3d3d3;
}

.chev {
  display: block;
  width: 3px;
  height: 3px;
  box-sizing: border-box;
  border-left: 1px solid #555;
  border-top: 1px solid #555;
  flex: none;
}

.chev.up {
  transform: rotate(45deg);
  margin-top: 4px;
}

.chev.down {
  transform: rotate(225deg);
}

.chev.left {
  transform: rotate(-45deg);
}

.chev.right {
  transform: rotate(135deg);
}

.pfoot {
  flex: 1;
  display: flex;
  align-items: center;
  justify-content: space-between;
  padding: 0 12px 0 2px;
}

.pfoot a {
  color: #2f6fba;
  text-decoration: underline;
}

.apply {
  width: 46px;
  height: 11px;
  text-align: center;
  line-height: 11px;
  background: #ededed;
  color: #aaa;
  border: 1px solid #e4e4e4;
  font-size: 8px;
}

.nav {
  flex: 1;
  min-height: 0;
  display: flex;
  flex-direction: column;
  background: #fff;
}

.tree {
  position: relative;
  flex: 1;
  padding-top: 1px;
}

.tree-lines {
  position: absolute;
  left: -6px;
  top: 0;
}

.trow {
  position: relative;
  height: 11.55px;
  display: flex;
  align-items: center;
  white-space: nowrap;
  font-size: 7.6px;
}

.lv0 {
  padding-left: 14px;
}

.lv0 .tlabel {
  position: absolute;
  left: 28px;
}

.lv1 .tlabel {
  position: absolute;
  left: 30px;
}

.lv2 .tlabel {
  position: absolute;
  left: 43px;
  padding: 0 1px;
}

.tsel {
  background: #e8e8e8;
}

.texp {
  position: absolute;
  left: 3px;
  width: 6px;
  height: 6px;
  box-sizing: border-box;
  background: #fff;
  border: 1px solid #aaa;
  font-style: normal;
  font-size: 6px;
  line-height: 4px;
  text-align: center;
  color: #555;
}

.lv1 .texp {
  left: 15px;
}

/* views */
.views {
  flex: 1;
  min-width: 0;
  display: grid;
  grid-template-columns: 414px 415px;
  grid-template-rows: 200px 199px;
  column-gap: 1px;
  row-gap: 2px;
  padding-top: 3px;
  background: #c4c8cc;
}

.vw {
  display: flex;
  flex-direction: column;
  min-height: 0;
  box-sizing: border-box;
  background: #d5dfe9;
  border: 1px solid #6a7480;
  padding: 0 4px 3px;
}

.v3d {
  grid-column: 1;
  grid-row: 1;
  padding: 0 5px 4px 4px;
}

.plan {
  grid-column: 2;
  grid-row: 1 / 3;
}

.elev {
  grid-column: 1;
  grid-row: 2;
  padding-right: 5px;
}

.vw.on {
  background: #a6c6e2;
  border-color: #4a7a8a;
  box-shadow: inset 0 -3px 0 #7ab8e0;
}

.vw-head {
  height: 19px;
  flex: none;
  display: flex;
  align-items: center;
  white-space: nowrap;
  color: #444;
}

.vw.on .vw-head {
  background: linear-gradient(#b0cbe4, #cfe0f0);
  margin: 0 -5px 0 -4px;
  padding: 0 5px 0 4px;
}

.vw-title {
  flex: 1;
  text-align: center;
  font-size: 9.4px;
  padding-right: 4px;
}

.vw-btns {
  display: flex;
  gap: 1px;
}

.vw-btns i {
  width: 20px;
  height: 10px;
  box-sizing: border-box;
  border: 1px solid #9aa8b8;
  background: #d8e2ec;
  font-style: normal;
  font-size: 7px;
  line-height: 8px;
  text-align: center;
  color: #567;
}

.vw.on .vw-x {
  background: #d9605a;
  border-color: #b84a44;
  color: #fff;
  font-weight: 700;
}

.vw-main {
  flex: 1;
  min-height: 0;
  display: flex;
  background: #fff;
}

.canvas {
  position: relative;
  flex: 1;
  min-width: 0;
  display: flex;
  align-items: center;
  justify-content: center;
}

.sheet {
  background: #fff;
  border: 1px solid #6e6e6e;
  display: flex;
}

.dim {
  font-family: "Liberation Sans", Arial, sans-serif;
}

.cube-nav {
  position: absolute;
  right: 1px;
  top: 6px;
  display: flex;
  flex-direction: column;
  align-items: center;
  gap: 4px;
}

.vcube {
  margin-right: 4px;
}

.navbar {
  width: 22px;
  height: 74px;
  box-sizing: border-box;
  display: flex;
  flex-direction: column;
  align-items: center;
  gap: 4px;
  padding-top: 2px;
  background: #f0f0f0;
  border: 1px solid #777;
  border-radius: 3px;
}

.navbar hr {
  width: 18px;
  margin: 0;
  border: 0;
  border-top: 1px solid #c8c8c8;
}

.nb-dot {
  width: 5px;
  height: 5px;
  border-radius: 50%;
  background: #c0c0c0;
  border: 1px solid #777;
  flex: none;
  box-sizing: border-box;
}

.navbar .nb-dot:last-child {
  margin-top: 2px;
}

.vscroll {
  width: 11px;
  flex: none;
  display: flex;
  flex-direction: column;
  align-items: center;
  background: #f6f6f6;
}

.vscroll i {
  display: block;
  width: 10px;
  height: 10px;
  margin-top: 70px;
  background: #d0d0d0;
}

.vscroll .down {
  margin-top: auto;
  margin-bottom: 4px;
}

.plan .vscroll i {
  margin-top: 171px;
}

.vbar {
  height: 11px;
  flex: none;
  display: flex;
  align-items: center;
  background: #f0f0f0;
  margin-top: 1px;
}

.vb-scale {
  width: 52px;
  flex: none;
  padding-left: 19px;
  box-sizing: border-box;
  font-size: 7.5px;
  white-space: nowrap;
}

.vb-icons {
  display: flex;
  gap: 3.5px;
  flex: none;
  margin-right: 8px;
}

.hscroll {
  flex: 1;
}

.hscroll i {
  display: block;
  width: 10px;
  height: 10px;
  margin-left: 89px;
  background: #cfcfcf;
}

.v3d .hscroll i {
  margin-left: 77px;
}

.elev .hscroll i {
  margin-left: 90px;
}

.vbar .chev.right {
  margin-right: 16px;
}

.status {
  height: 16px;
  flex: none;
  margin: 0 4px 5px 6px;
  padding: 0 57px 0 1px;
  display: flex;
  align-items: center;
  justify-content: space-between;
  background: linear-gradient(#d8d8d8, #f2f2f2);
  white-space: nowrap;
  font-size: 7.4px;
}

.st-icons {
  display: flex;
  align-items: center;
  gap: 7px;
}

.st-icons svg {
  width: 10px;
  height: 10px;
}

.st-num {
  margin-left: -7px;
}
</style>

<style>
html,
body {
  margin: 0;
  background: #ee8c5e;
}
</style>
